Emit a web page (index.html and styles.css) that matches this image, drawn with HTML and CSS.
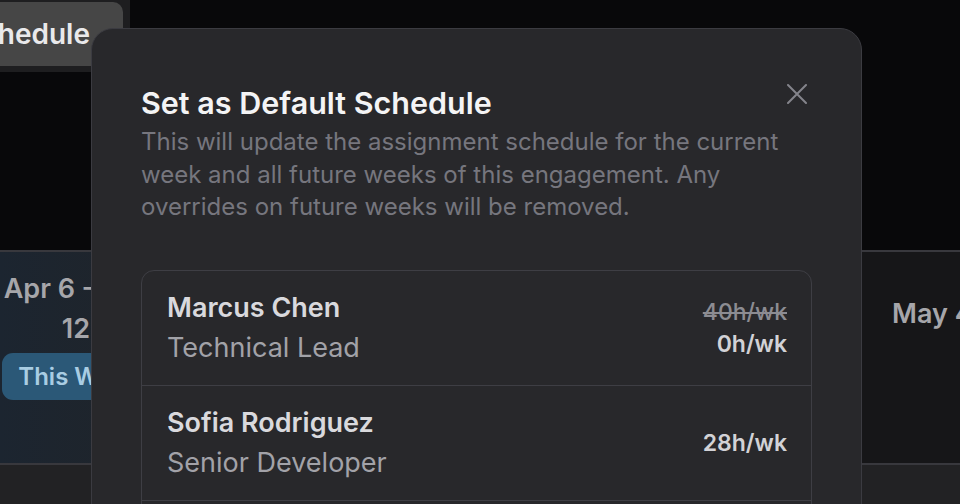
FILE: index.html
```html
<!DOCTYPE html>
<html lang="en">
<head>
<meta charset="utf-8">
<title>Set as Default Schedule</title>
<link rel="stylesheet" href="styles.css">
</head>
<body>
<div class="page">
  <header class="toolbar">
    <div class="toolbar-group">
      <button class="tool-btn">Set as Default Schedule</button>
    </div>
  </header>

  <section class="weeks">
    <div class="week week-current">
      <div class="week-range">Apr 6 - Apr<br>12</div>
      <span class="chip">This Week</span>
    </div>
    <div class="week week-mid"></div>
    <div class="week week-mid"></div>
    <div class="week week-mid"></div>
    <div class="week week-last">
      <div class="week-range">May 4 - May 10</div>
    </div>
  </section>

  <section class="below"></section>

  <div class="modal" role="dialog" aria-labelledby="modal-title">
    <button class="close" aria-label="Close">
      <svg viewBox="0 0 20 20" width="20" height="20"><path d="M1 1 L19 19 M19 1 L1 19" stroke="currentColor" stroke-width="2" stroke-linecap="round" fill="none"/></svg>
    </button>
    <h2 class="modal-title" id="modal-title">Set as Default Schedule</h2>
    <p class="modal-desc">This will update the assignment schedule for the current week and all future weeks of this engagement. Any overrides on future weeks will be removed.</p>

    <ul class="people">
      <li class="person">
        <div class="who">
          <div class="name">Marcus Chen</div>
          <div class="role">Technical Lead</div>
        </div>
        <div class="hours">
          <div class="old">40h/wk</div>
          <div class="new">0h/wk</div>
        </div>
      </li>
      <li class="person">
        <div class="who">
          <div class="name">Sofia Rodriguez</div>
          <div class="role">Senior Developer</div>
        </div>
        <div class="hours">
          <div class="new">28h/wk</div>
        </div>
      </li>
      <li class="person">
        <div class="who">
          <div class="name">James Park</div>
          <div class="role">Designer</div>
        </div>
        <div class="hours">
          <div class="new">20h/wk</div>
        </div>
      </li>
    </ul>
  </div>
</div>
</body>
</html>
```

FILE: styles.css
```css
* { box-sizing: border-box; }
html, body {
  margin: 0;
  padding: 0;
  background: #08080a;
  overflow: hidden;
}
body {
  font-family: Inter, "Noto Sans", "Liberation Sans", sans-serif;
  width: 960px;
  height: 504px;
}
.page {
  position: relative;
  width: 960px;
  height: 504px;
  overflow: hidden;
}

/* top toolbar */
.toolbar {
  height: 250px;
  background: #08080a;
}
.toolbar-group {
  width: 130px;
  height: 72px;
  display: flex;
  justify-content: flex-end;
  align-items: flex-start;
  background: #1e1e20;
  border-radius: 0 0 12px 0;
  padding: 2px 7px 0 0;
}
.tool-btn {
  flex: none;
  white-space: nowrap;
  height: 64px;
  border: none;
  border-radius: 10px;
  background: #464646;
  color: #e9e9eb;
  font-family: inherit;
  font-size: 28px;
  font-weight: 600;
  padding: 0 33px 0 20px;
}

/* week strip */
.weeks {
  display: flex;
  height: 215px;
  border-top: 2px solid #38383d;
  border-bottom: 2px solid #38383d;
}
.week {
  flex: none;
  display: flex;
  flex-direction: column;
  align-items: center;
  padding-top: 17px;
  background: #1b1b1e;
}
.week-current {
  width: 152px;
  background: linear-gradient(90deg, #1c2530 0%, #1f242a 100%);
}
.week-mid {
  width: 236px;
  border-left: 2px solid #38383d;
}
.week-last {
  flex: 1;
  align-items: flex-start;
  padding-left: 30px;
  background: #161618;
  border-left: 2px solid #3a3a3f;
}
.week-range {
  color: #a6a6aa;
  font-size: 27px;
  font-weight: 600;
  line-height: 40px;
  text-align: center;
  white-space: nowrap;
}
.week-last .week-range { margin-top: 25px; }
.chip {
  margin-top: 4px;
  margin-left: 6px;
  padding: 0 16px;
  height: 47px;
  line-height: 47px;
  border-radius: 11px;
  background: #2b5877;
  color: #a9cde3;
  font-size: 24px;
  font-weight: 600;
  white-space: nowrap;
}

.below {
  height: 50px;
  background: #222224;
}

/* modal */
.modal {
  position: absolute;
  left: 91px;
  top: 28px;
  width: 771px;
  height: 540px;
  background: #28282b;
  border: 1.5px solid #3b3b41;
  border-radius: 22px;
  padding: 57px 49px 0 49px;
}
.close {
  position: absolute;
  top: 55px;
  right: 54px;
  width: 20px;
  height: 20px;
  padding: 0;
  border: none;
  background: none;
  color: #84848b;
  display: flex;
}
.modal-title {
  margin: 0;
  font-size: 30.5px;
  line-height: 34px;
  font-weight: 600;
  color: #f4f4f5;
}
.modal-desc {
  margin: 6px 0 0 0;
  font-size: 24px;
  line-height: 32.5px;
  color: #76767e;
}

.people {
  list-style: none;
  margin: 46px 0 0 0;
  padding: 0;
  border: 1.5px solid #3e3e44;
  border-radius: 13px;
}
.person {
  display: flex;
  align-items: center;
  justify-content: space-between;
  padding: 17px 24px 17px 25px;
  border-bottom: 1.5px solid #3e3e44;
}
.name {
  font-size: 27px;
  line-height: 40px;
  font-weight: 600;
  color: #d9d9dd;
}
.role {
  font-size: 27px;
  line-height: 40px;
  color: #a2a2a8;
}
.hours {
  text-align: right;
  font-size: 23px;
  line-height: 32px;
  font-weight: 600;
}
.old {
  color: #8c8c92;
  font-weight: 500;
  text-decoration: line-through;
}
.new {
  color: #d2d2d6;
}
```
